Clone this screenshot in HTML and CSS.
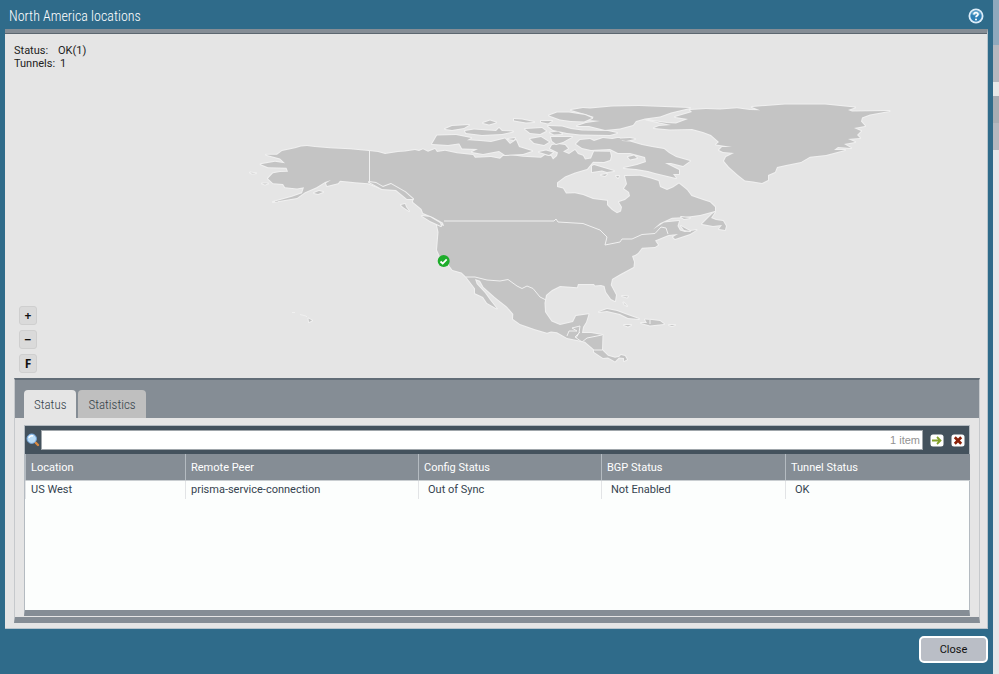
FILE: index.html
```
<!DOCTYPE html>
<html lang="en">
<head>
<meta charset="utf-8">
<title>North America locations</title>
<link rel="stylesheet" href="styles.css">
</head>
<body>
<main class="dialog">
  <header class="titlebar">
    <h1>North America locations</h1>
    <button class="help" type="button" aria-label="Help">
      <svg viewBox="0 0 16 16" width="16" height="16"><circle cx="8" cy="8" r="7.5" fill="#dcecf8"/><circle cx="8" cy="8" r="5.700" fill="#2f7fb4"/><path d="M3 6a5.500 5.500 0 0 1 10 0Q8 9 3 6z" fill="#63a5cc"/><path d="M6 6.400C6 4.200 10 4.100 10 6.400 10 7.800 8 7.700 8 9.300" fill="none" stroke="#fff" stroke-width="1.700"/><circle cx="8" cy="11.500" r="1" fill="#fff"/></svg>
    </button>
  </header>
  <section class="content">
    <div class="map">
      <dl class="summary">
        <dt>Status:</dt><dd>OK(1)</dd>
        <dt>Tunnels:</dt><dd class="count">1</dd>
      </dl>
      <svg class="geo" viewBox="5 34 982 344" role="img" aria-label="Map of North America">
        <g class="land">
          <path d="M266 154.700L277 154.700 282 151 295 148.300 301 146.500 307 146 315 147 330 148.300 350 149.300 369 151 378 152 385 154 398 152 405 151.500 415 150 419 151 423 149.300 428 151.700 435 149 437 152 445 150.700 457 153.300 473 155 475 157.700 491 157 500 158.700 503 156 510 155 523 156.700 541 157.700 545 155 551 156 553 159.500 557 156 558 152.500 550 148.500 552 145 558 144 565 145 568 148.500 563 151.500 569 154 575 150 578 154 583 155.700 585 159.500 591 158.500 594 151.500 610 151.700 611 156 610 160 604 162 593 161.700 587 169 575 172.500 565 176.500 557 182.500 557 187 563 188.500 566 193.500 575 193.300 583 195 593 199 607 200.700 607 205 612 210 617 213.300 621 211.500 622 207 619 202 625 200 630 196 629 192 624 188.500 627 184 625 176 640 175.700 650 178.300 658.500 181 660 187 667 190 673 187.500 679 183.500 687 190 691.500 196 703 200 710 202.300 715 207 715 211 700 215 683 217.300 672 217.700 660 223.300 653 229.500 664 222.500 679 221 677.500 226 680 230.500 685 232 696.500 230 690 234 675 239 673 237 678 234 668.500 235 655 240.500 658 245 655 247 642 247.700 638 253 635 255 632 256 634 262 633.500 267 620 274.300 612 279 610.700 285 616 295 615 301 611 299 606 292 604.500 286 601 285 595 285.500 594 284 578 284 577 287.300 560 286 552 290 546 295 544.500 303 545 312 551.500 321.500 560 325 573 322 576 316 588.500 314.300 586 322.300 583 327 582 333 591 333 602.500 335 602 350 608 355.700 615 357.700 619 357 621 355 625 356 627 359.500 624 361 624 358 619 357.500 615 361.500 608 357.500 603 358 594 352 594 349.500 585 341.700 577 340 567 338 557 332.300 551 331.500 547 332.700 535 329.300 520 324 513 319 513.300 314 507 306.700 495 297.300 483.500 287 480 280.700 475 279 476.700 284 485 293 490 300 496.700 308.500 487 303 483 297 475 293.300 475 288.500 466 276.700 461.500 272.500 452.500 270 448 264 440 256.700 437 250 438.500 232 436.700 224 444 226 443 222.700 433 217.300 423 213 421.500 209 413 202 413.500 199 405 195 397 190 383 189 368 183.300 355 182.300 348 181.500 340 180.700 338 183.300 327 186 326 183.300 331 180 325 182 316.500 187.300 305 192.300 297 198 273 202 292 196.700 302 193.300 304 187.300 297 188.500 285 187.300 283 184 273 183.300 268 178.500 273 173.300 280 172 288 171.700 286.500 167.700 268 167.300 260.700 164.300 275 161.700 285 163.300 280 158.500z"/>
          <path d="M646 119.500L653 121 667 123 676 123.500 688 119 675 117 692 112 690 110 706 109 720 109.500 737 108.300 750 110 760 110.300 752 107 785 104.500 825 104.500 855 107.500 848 110 852 111.500 889.500 111 870 114.500 862 117.500 861 121.500 865 126 854 128 861 131 857 135 860 138 848 139 855 142 844 144 851 148 838 147 834 150 845 150 826 155 810 156.700 801 162 786 165 777 167 775 172 768 175 768 180 762 183 753 181.500 745 180.500 738 175 729 167 724 161 726 157 734 153 723 152 719 150 722 147 732 147 716 144.500 719 142 711 135 703 132 692 129 670 129.500 654 128 659 126 671 125z"/>
          <path d="M571 110L583 108 590 108.500 612 106.500 639 106 690 108 671 112.500 660 116.500 645 118.500 636 121 633 125 620 128.500 605 130 589 126 577 126 586 123 600 121 588 120 594 117 585 114z"/>
          <path d="M549 115.500L557 112.500 569 112.500 585 115 592 118 584 121.500 571 121 560 119.500zM437 135.500L456 135 471 138 462 143 448 145 432 144zM459 143L466 140 480 141 491 142 505 138.500 510 144 516 140 519 147 532 151 523 154 505 155 499 151 483 154 472 152 478 149 462 148.500zM445 129L452 126 469 125 464 128 452 130zM465 131L474 129.500 496 131 499 128 502 131 513 131.500 502 134 482 135 466 133zM514 119L522 119.500 534 122 526 122.500 514 120.500zM541 121L552 121 548 123.500 541 122zM525 129L542 128 546 131 540 134 530 133zM548 126L562 126.500 571 129 582 130.500 608 131 617 133 610 135 580 134.500 567 133 553 130zM551 137L572 137 563 142 556 144 552 141zM530 139L541 137 549 142 544 145 534 143zM483 123L490 120.500 496 122.500 489 124.500zM539 152L546 150.500 553 152.500 549 155zM508 139L515 138 514 140zM550 132.500L558 131.500 562 134 554 134.500z"/>
          <path d="M576 144L580 140 590 139 594 141 603 138 612 139 619 138 622 141 630 141.500 642 145 652 147 664 149 669 153 676 157 690 161 683 166 671 163 665 163 679 170 679 174 673 174 676 178 655 173 648 171 636 169 624 168 637 165 646 162 645 157 630 153 618 153 610 149 591 150 582 148zM592 166L594 165 614 171 607 172 602 170.500 592 172zM601 175L607 174 605 176zM616 176L619 176 618 178zM628 157L634 155.500 637 158 630 159.500zM613 139L630 138 635 139 626 141zM702 224L712 214 715 212 711 218 716 220 723 221 726 226 725 230 719 229 722 225 713 226zM681 226L690 231 684 230zM681 217L690 218 684 219z"/>
          <path d="M401 205L405 204 406 207 409 211 403 207zM422 216L430 217 440 223 441 226 430 221zM369 182L376 183 383 187 391 184 405 192 413 199 407 199 396 190 382 189zM314 193L319 191 323 192 318 194zM262 183.500L268 183.500 265 184.500zM250 172.500L256 173.200 252 173.500zM308.500 318.500L312 320.500 309 322zM599 312L607 309 617 311 625 314 639 319 628 318 620 314 607 311zM645 319.500L652 320 660 321 664 324 650 325.500 641 323 647 323zM624 325L631 325 628 326.500zM669 325L675 325 672 326zM622 296L628 296.500 627 297.500zM623.500 302.500L627 306 624.500 304.500z"/>
        </g>
        <g class="borders">
          <path d="M292 312.500L295 312.500M300 314.500L306 316 307 317"/>
          <path d="M369.500 151V183M444 221H554L556 219 558 222 583 223.500 600 230 607 237 605 245 620 242 622 239 632 239 642 234.500 655 233.500 661 227 666 228 668 234M466 277L475 277 487 280 500 281 508 279.500 517 286 522 288.500 527 286 533 288.500 540 297 546 300M567 336L569 331 577 331 572 328 580 326 579 333 576 338M580 332L575 337 582 342 587 338 602 335M594 350L602 350M650 320V324"/>
        </g>
        <circle cx="443.700" cy="261" r="6" fill="#1ead2b"/>
        <path d="M440.500 261.500l2.200 2 4-4.200" fill="none" stroke="#fff" stroke-width="1.800"/>
      </svg>
      <div class="zoom">
        <button type="button" aria-label="Zoom in">+</button>
        <button type="button" aria-label="Zoom out">−</button>
        <button type="button" aria-label="Fit map">F</button>
      </div>
    </div>
    <section class="details">
      <nav class="tabs">
        <button class="tab active" type="button">Status</button>
        <button class="tab" type="button">Statistics</button>
      </nav>
      <div class="pane">
        <div class="grid">
          <div class="search">
            <svg class="lens" viewBox="0 0 14 14" width="14" height="14" aria-hidden="true"><path d="M9 9l3 3" stroke="#d98a42" stroke-width="2.400" stroke-linecap="round"/><circle cx="5.700" cy="5.700" r="4.700" fill="#b9dcf7" stroke="#76a9e0"/><path d="M3 5a3 3 0 0 1 4-2" stroke="#fff" fill="none" stroke-width="1.500"/></svg>
            <div class="field">
              <input type="text" aria-label="Filter locations">
              <span>1 item</span>
            </div>
            <button type="button" aria-label="Apply filter"><svg viewBox="0 0 14 13" width="14" height="13"><rect x=".5" y=".5" width="13" height="12" rx="2.500" fill="#fff"/><path d="M2 6.500h8.500M7 3l3.500 3.500L7 10" fill="none" stroke="#84a12b" stroke-width="1.800"/></svg></button>
            <button type="button" aria-label="Clear filter"><svg viewBox="0 0 14 13" width="14" height="13"><rect x=".5" y=".5" width="13" height="12" rx="2.500" fill="#fff"/><path d="M3.800 3.300l6.400 6.400m0-6.400l-6.400 6.400" stroke="#8b2008" stroke-width="2.700"/></svg></button>
          </div>
          <table>
            <colgroup><col class="c1"><col class="c2"><col class="c3"><col class="c4"><col class="c5"></colgroup>
            <thead><tr><th>Location</th><th>Remote Peer</th><th>Config Status</th><th>BGP Status</th><th>Tunnel Status</th></tr></thead>
            <tbody><tr><td>US West</td><td>prisma-service-connection</td><td class="state">Out of Sync</td><td class="state">Not Enabled</td><td class="state">OK</td></tr></tbody>
          </table>
        </div>
      </div>
    </section>
  </section>
  <footer><button class="close" type="button">Close</button></footer>
</main>
<aside class="behind" aria-hidden="true"></aside>
</body>
</html>
```
FILE: styles.css
```
* {
  box-sizing: border-box;
}

body {
  display: flex;
  min-height: 100vh;
  margin: 0;
  color: #222;
  font: 11px/13px Roboto, sans-serif;
}

button {
  padding: 0;
  border: 0;
  background: none;
  color: inherit;
  font: inherit;
}

svg {
  display: block;
}

.dialog {
  display: flex;
  flex: 1;
  flex-direction: column;
  min-width: 0;
  padding: 0 5px;
  background: #2f6b8a;
}

.behind {
  width: 6px;
  background: linear-gradient(#8fa9bd 45px, #b5b8bf 45px 82px, #e8e8e8 82px 96px, #a8adb3 96px 123px, #b5b8bf 123px 150px, #e6e7e9 150px);
}

.titlebar {
  display: flex;
  align-items: center;
  justify-content: space-between;
  height: 29px;
  padding: 3px 4px 0;
}

h1 {
  margin: 0;
  color: #fff;
  font: 300 14px/22px "Roboto Condensed", Lato, sans-serif;
}

.content {
  display: flex;
  flex: 1;
  flex-direction: column;
  border-top: 4px solid #858d95;
  border-right: 1px solid #b8c4cc;
  border-bottom: 1px solid #b8c4cc;
  background: #e5e5e5;
}

.map {
  position: relative;
  flex: 1;
  border-top: 1px solid #5c6770;
}

.geo {
  width: 100%;
  height: auto;
}

.land {
  fill: #c4c4c4;
  stroke: #f0f0f0;
  stroke-width: 2;
  stroke-linejoin: round;
  paint-order: stroke;
}

.borders {
  fill: none;
  stroke: #f0f0f0;
}

.summary {
  position: absolute;
  top: 10px;
  left: 9px;
  display: grid;
  grid-template-columns: 44px auto;
  margin: 0;
}

.summary dd {
  margin: 0;
}

.summary .count {
  padding-left: 2px;
}

.zoom {
  position: absolute;
  bottom: 5px;
  left: 14px;
  display: grid;
  gap: 5px;
}

.zoom button {
  width: 18px;
  height: 19px;
  border: 1px solid #cfcfcf;
  border-radius: 3px;
  background: #dadada;
  color: #111;
  font: 700 12px/16px "Noto Sans", sans-serif;
}

.details {
  margin: 0 7px 5px 9px;
  border: 1px solid #c6c9cc;
  border-top: 2px solid #626d77;
  border-bottom: 6px solid #858d95;
}

.tabs {
  display: flex;
  align-items: flex-end;
  gap: 2px;
  height: 38px;
  padding-left: 9px;
  background: #858d95;
}

.tab {
  height: 28px;
  padding: 0 10px;
  border-radius: 4px 4px 0 0;
  background: #bfbfbf;
  color: #333e48;
  font: 300 13px/30px "Roboto Condensed", Lato, sans-serif;
}

.tab.active {
  background: #e5e5e5;
}

.pane {
  padding: 7px 9px 1px;
}

.grid {
  min-height: 191px;
  border: 1px solid #b4bbc1;
  border-bottom: 6px solid #858d95;
  background: #fcfefd;
}

.search {
  display: flex;
  align-items: center;
  gap: 7px;
  height: 28px;
  padding: 0 4px 0 1px;
  background: #44525d;
}

.field {
  display: flex;
  flex: 1;
  align-items: center;
  height: 20px;
  margin-left: -6px;
  padding-right: 2px;
  border: 1px solid #a0a6ab;
  background: #fff;
  color: #929292;
  font: 11px/16px "Liberation Sans", sans-serif;
}

.field input {
  flex: 1;
  min-width: 0;
  height: 18px;
  border: 0;
  background: transparent;
  outline: 0;
}

table {
  width: 100%;
  border-collapse: collapse;
  table-layout: fixed;
}

.c1 { width: 160px; }
.c2 { width: 233px; }
.c3 { width: 183px; }
.c4 { width: 184px; }
.c5 { width: 184px; }

th {
  height: 26px;
  padding: 1px 5px 0;
  border-left: 1px solid #b4bbc1;
  border-bottom: 1px solid #c9ced1;
  background: #858d95;
  color: #fff;
  font-weight: 400;
  text-align: left;
}

td {
  height: 19px;
  padding: 0 5px;
  border-left: 1px solid #e2e4e6;
  color: #35434f;
}

.state {
  padding-left: 9px;
}

footer {
  display: flex;
  justify-content: flex-end;
  padding: 7px 0 12px;
}

.close {
  width: 69px;
  height: 27px;
  border: 2px solid #fff;
  border-radius: 5px;
  background: #babec6;
  color: #111;
}
```
